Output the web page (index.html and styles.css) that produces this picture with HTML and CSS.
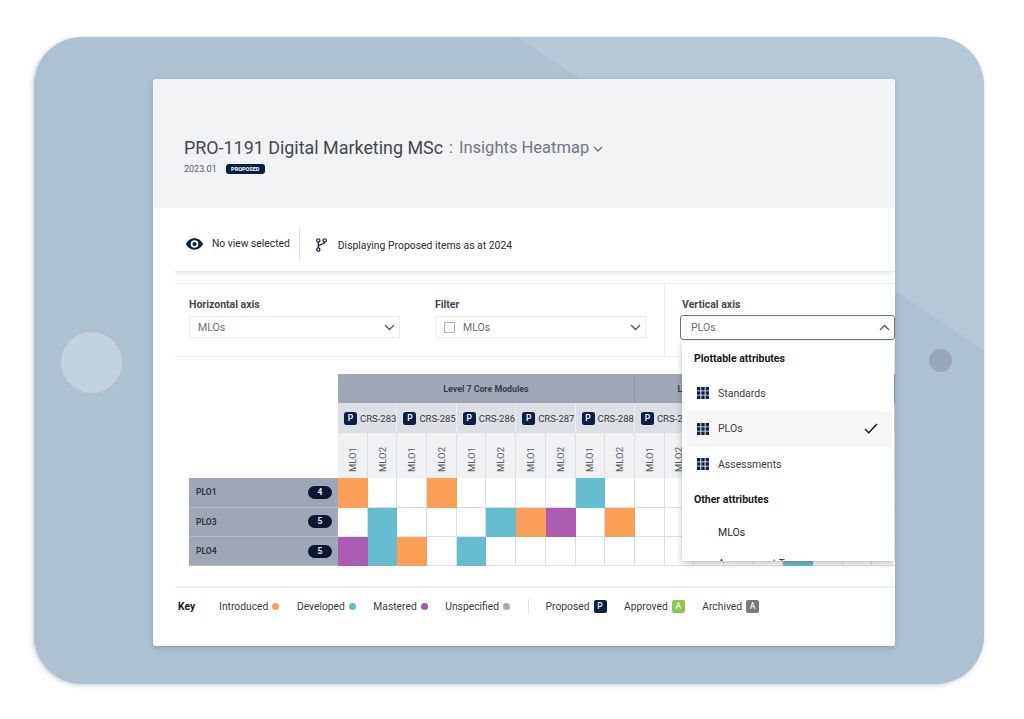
FILE: index.html
```html
<!DOCTYPE html>
<html lang="en">
<head>
<meta charset="utf-8">
<title>Insights Heatmap</title>
<link rel="stylesheet" href="styles.css">
</head>
<body>
<div class="device">
  <div class="home"></div>
  <main class="screen">
    <header class="head">
      <h1 class="title">PRO-1191 Digital Marketing MSc<span class="sep">:</span><span class="sub">Insights Heatmap</span>
        <svg class="title-chev" width="10" height="6" viewBox="0 0 10 6"><path d="M1 1l4 4 4-4" fill="none" stroke="#6b7078" stroke-width="1.3"/></svg>
      </h1>
      <div class="version"><span>2023.01</span><span class="status">PROPOSED</span></div>
    </header>

    <div class="toolbar">
      <div class="view">
        <svg width="17" height="12" viewBox="0 0 24 16"><path fill-rule="evenodd" fill="#0d2145" d="M12 0C6.5 0 2 3.3 0 8c2 4.700 6.500 8 12 8s10-3.300 12-8c-2-4.700-6.500-8-12-8zm0 13.300a5.300 5.300 0 1 1 0-10.600 5.300 5.300 0 0 1 0 10.600zM12 5a3 3 0 1 0 0 6 3 3 0 0 0 0-6z"/></svg>
        <span>No view selected</span>
      </div>
      <div class="display">
        <svg width="11" height="14" viewBox="0 0 12 15" fill="none" stroke="#0d2145" stroke-width="1.3"><circle cx="2.500" cy="2.500" r="1.800"/><circle cx="9.500" cy="2.500" r="1.800"/><circle cx="2.500" cy="12.500" r="1.800"/><path d="M2.500 4.300v6.400M9.500 4.300c0 3-7 2-7 5"/></svg>
        <span>Displaying Proposed items as at 2024</span>
      </div>
    </div>

    <section class="filters">
      <div class="field field-h">
        <label class="label">Horizontal axis</label>
        <div class="select"><span>MLOs</span><svg class="chev" width="11" height="7" viewBox="0 0 11 7"><path d="M1 1l4.500 4.500L10 1" fill="none" stroke="#555b63" stroke-width="1.400"/></svg></div>
      </div>
      <div class="field field-f">
        <label class="label">Filter</label>
        <div class="select"><i class="check-box"></i><span>MLOs</span><svg class="chev" width="11" height="7" viewBox="0 0 11 7"><path d="M1 1l4.500 4.500L10 1" fill="none" stroke="#555b63" stroke-width="1.400"/></svg></div>
      </div>
      <div class="field field-v">
        <label class="label">Vertical axis</label>
        <div class="select open"><span>PLOs</span><svg class="chev" width="11" height="7" viewBox="0 0 11 7"><path d="M1 6l4.500-4.500L10 6" fill="none" stroke="#555b63" stroke-width="1.400"/></svg></div>
        <div class="menu">
          <div class="menu-head">Plottable attributes</div>
          <div class="menu-item"><svg class="grid-ico" width="12" height="12" viewBox="0 0 12 12"><path fill="#0d2145" d="M0 0h3.400v3.400H0zM4.300 0h3.400v3.400H4.300zM8.600 0H12v3.400H8.600zM0 4.300h3.400v3.400H0zM4.300 4.300h3.400v3.400H4.300zM8.600 4.300H12v3.400H8.600zM0 8.600h3.400V12H0zM4.300 8.600h3.400V12H4.300zM8.600 8.600H12V12H8.600z"/></svg>Standards</div>
          <div class="menu-item active"><svg class="grid-ico" width="12" height="12" viewBox="0 0 12 12"><path fill="#0d2145" d="M0 0h3.400v3.400H0zM4.300 0h3.400v3.400H4.300zM8.600 0H12v3.400H8.600zM0 4.300h3.400v3.400H0zM4.300 4.300h3.400v3.400H4.300zM8.600 4.300H12v3.400H8.600zM0 8.600h3.400V12H0zM4.300 8.600h3.400V12H4.300zM8.600 8.600H12V12H8.600z"/></svg>PLOs<svg class="tick" width="14" height="11" viewBox="0 0 14 11"><path d="M1 6l3.700 3.700L13 1" fill="none" stroke="#111" stroke-width="1.400"/></svg></div>
          <div class="menu-item"><svg class="grid-ico" width="12" height="12" viewBox="0 0 12 12"><path fill="#0d2145" d="M0 0h3.400v3.400H0zM4.300 0h3.400v3.400H4.300zM8.600 0H12v3.400H8.600zM0 4.300h3.400v3.400H0zM4.300 4.300h3.400v3.400H4.300zM8.600 4.300H12v3.400H8.600zM0 8.600h3.400V12H0zM4.300 8.600h3.400V12H4.300zM8.600 8.600H12V12H8.600z"/></svg>Assessments</div>
          <div class="menu-head other">Other attributes</div>
          <div class="menu-plain">MLOs</div>
          <div class="menu-plain">Assessment Types</div>
        </div>
      </div>
    </section>

    <section class="heat">
      <div class="corner"></div>
      <div class="level l1">Level 7 Core Modules</div>
      <div class="level l2">Level 7 Option Modules</div>
      <div class="level l3"></div>

      <div class="course"><b class="p">P</b>CRS-283</div>
      <div class="course"><b class="p">P</b>CRS-285</div>
      <div class="course"><b class="p">P</b>CRS-286</div>
      <div class="course"><b class="p">P</b>CRS-287</div>
      <div class="course"><b class="p">P</b>CRS-288</div>
      <div class="course"><b class="p">P</b><span class="cut">CRS-2</span></div>
      <div class="course"></div>
      <div class="course"></div>
      <div class="course"></div>
      <div class="course one"></div>

      <div class="mlo"><span>MLO1</span></div><div class="mlo"><span>MLO2</span></div>
      <div class="mlo"><span>MLO1</span></div><div class="mlo"><span>MLO2</span></div>
      <div class="mlo"><span>MLO1</span></div><div class="mlo"><span>MLO2</span></div>
      <div class="mlo"><span>MLO1</span></div><div class="mlo"><span>MLO2</span></div>
      <div class="mlo"><span>MLO1</span></div><div class="mlo"><span>MLO2</span></div>
      <div class="mlo"><span>MLO1</span></div><div class="mlo"><span>MLO2</span></div>
      <div class="mlo"></div><div class="mlo"></div>
      <div class="mlo"></div><div class="mlo"></div>
      <div class="mlo"></div><div class="mlo"></div>
      <div class="mlo"></div>

      <div class="rowhead">PLO1<span class="pill">4</span></div>
      <i class="c o"></i><i class="c"></i><i class="c"></i><i class="c o"></i><i class="c"></i><i class="c"></i><i class="c"></i><i class="c"></i><i class="c t"></i><i class="c"></i><i class="c"></i><i class="c"></i><i class="c"></i><i class="c"></i><i class="c"></i><i class="c"></i><i class="c"></i><i class="c"></i><i class="c"></i>

      <div class="rowhead">PLO3<span class="pill">5</span></div>
      <i class="c"></i><i class="c t"></i><i class="c"></i><i class="c"></i><i class="c"></i><i class="c t"></i><i class="c o"></i><i class="c m"></i><i class="c"></i><i class="c o"></i><i class="c"></i><i class="c"></i><i class="c"></i><i class="c"></i><i class="c"></i><i class="c"></i><i class="c"></i><i class="c"></i><i class="c"></i>

      <div class="rowhead">PLO4<span class="pill">5</span></div>
      <i class="c m"></i><i class="c t"></i><i class="c o"></i><i class="c"></i><i class="c t"></i><i class="c"></i><i class="c"></i><i class="c"></i><i class="c"></i><i class="c"></i><i class="c"></i><i class="c"></i><i class="c"></i><i class="c"></i><i class="c"></i><i class="c t"></i><i class="c"></i><i class="c"></i><i class="c"></i>
    </section>

    <footer class="key">
      <strong class="key-title">Key</strong>
      <span class="key-item">Introduced<i class="dot d-o"></i></span>
      <span class="key-item">Developed<i class="dot d-t"></i></span>
      <span class="key-item">Mastered<i class="dot d-m"></i></span>
      <span class="key-item">Unspecified<i class="dot d-g"></i></span>
      <span class="key-div"></span>
      <span class="key-item">Proposed<b class="tag t-p">P</b></span>
      <span class="key-item">Approved<b class="tag t-a">A</b></span>
      <span class="key-item">Archived<b class="tag t-x">A</b></span>
    </footer>
  </main>
  <div class="cam"></div>
  <svg class="sheen" width="950" height="647" viewBox="0 0 950 647"><polygon points="484,0 950,313 950,0" fill="#fff" fill-opacity=".11"/></svg>
</div>
</body>
</html>
```

FILE: styles.css
```css
* { box-sizing: border-box; }
html, body { margin: 0; padding: 0; background: #fff; }
body { height: 719px; overflow: hidden; font-family: Roboto, "Liberation Sans", sans-serif; color: #26292e; }

.device {
  position: relative;
  width: 950px;
  height: 647px;
  margin: 37px 0 0 34px;
  padding-left: 27px;
  display: flex;
  align-items: center;
  background: #aec1d1;
  border-radius: 48px;
  box-shadow: -1px 1px 5px rgba(90, 105, 120, .35);
  overflow: hidden;
}
.home { width: 61px; height: 61px; border-radius: 50%; background: #c3d2df; flex: none; margin-top: 3px; }
.cam { width: 23px; height: 23px; border-radius: 50%; background: #98a8b7; flex: none; margin-left: 34px; }
.sheen { position: absolute; left: 0; top: 0; pointer-events: none; }

.screen {
  width: 742px;
  height: 567px;
  margin: 4px 0 0 31px;
  flex: none;
  background: #fff;
  border-radius: 3px;
  box-shadow: 0 2px 6px rgba(70, 85, 100, .3);
  overflow: hidden;
  display: flex;
  flex-direction: column;
}

.head { height: 129px; flex: none; background: #f1f2f4; padding: 58px 0 0 31px; }
.title { margin: 0; font-size: 17.900px; line-height: 22px; font-weight: 400; color: #45484e; display: flex; align-items: center; white-space: pre; }
.sep { color: #6b7078; font-size: 16px; margin-left: 6px; }
.sub { color: #74787f; font-size: 16.550px; margin-left: 6px; }
.title-chev { margin-left: 4px; margin-top: 1px; }
.version { display: flex; align-items: center; gap: 9px; margin-top: 5px; font-size: 9px; color: #555a61; }
.status { background: #0b1f45; color: #fff; font-size: 5.500px; font-weight: 700; height: 10px; line-height: 10px; padding: 0 3px; border-radius: 3px; width: 39px; text-align: center; }

.toolbar {
  margin-left: 22px;
  height: 64px;
  flex: none;
  display: flex;
  align-items: center;
  border-bottom: 1px solid #e9eaec;
  box-shadow: 0 2px 3px rgba(120, 125, 135, .16);
  clip-path: inset(0 0 -6px 0);
  font-size: 10.300px;
  color: #2a2d33;
}
.view { display: flex; align-items: center; gap: 9px; padding-left: 11px; height: 30px; padding-right: 9px; border-right: 1px solid #dfe0e3; margin-top: 9px; }
.view span { margin-top: -1px; }
.display { display: flex; align-items: center; gap: 11px; padding-left: 16px; margin-top: 11px; font-size: 10.400px; }

.filters {
  margin: 11px 0 0 22px;
  height: 74px;
  flex: none;
  display: flex;
  border-top: 1px solid #eeeff1;
  border-bottom: 1px solid #eeeff1;
}
.field { position: relative; padding-top: 14px; }
.field-h { width: 260px; padding-left: 14px; }
.field-f { width: 229px; }
.field-v { flex: 1; border-left: 1px solid #eeeff1; padding-left: 17px; }
.label { display: block; font-size: 10.500px; font-weight: 700; color: #45484e; line-height: 13px; margin-bottom: 5px; }
.select {
  width: 211px;
  height: 22px;
  display: flex;
  align-items: center;
  padding: 0 4px 0 8px;
  border: 1px solid #eceded;
  font-size: 10.500px;
  color: #6b6f76;
}
.chev { margin-left: auto; }
.check-box { width: 11px; height: 11px; border: 1px solid #b3b6bb; margin-right: 8px; flex: none; }
.select.open { width: 215px; height: 25px; margin: -1px 0 0 -2px; border: 1px solid #6f757d; border-radius: 3px; padding-left: 10px; }
.menu {
  position: absolute;
  left: 17px;
  top: 57px;
  width: 212px;
  height: 220px;
  background: #fff;
  box-shadow: 0 2px 6px rgba(50, 55, 65, .35);
  overflow: hidden;
  z-index: 2;
  font-size: 10.500px;
  color: #3a3d43;
}
.menu-head { font-weight: 700; color: #16181c; height: 34.500px; line-height: 36px; padding-left: 12px; }
.menu-item { height: 35.500px; display: flex; align-items: center; padding: 0 14px 0 10px; margin: 0 2px 0 5px; }
.menu-item.active { background: #f7f7f8; }
.grid-ico { margin-right: 9px; flex: none; }
.tick { margin-left: auto; }
.menu-plain { height: 31px; line-height: 31px; padding-left: 36px; color: #26292e; }

.heat {
  margin: 17px 0 0 36px;
  height: 192px;
  flex: none;
  display: grid;
  grid-template-columns: 149px repeat(19, 29.700px);
  grid-template-rows: 29px 30px 45px 29.500px 29.500px 29px;
  overflow: hidden;
  font-size: 9px;
}
.corner { grid-row: 1 / 4; }
.level { background: #a0a7b6; font-weight: 700; color: #3a3f4c; display: flex; align-items: center; justify-content: center; font-size: 8.800px; }
.l1 { grid-column: span 10; border-right: 1px solid #8f96a6; }
.l2 { grid-column: span 6; }
.l3 { grid-column: span 3; }
.course {
  grid-column: span 2;
  background: #dcdfe4;
  border-right: 1px solid #eceef0;
  display: flex;
  align-items: center;
  padding: 1px 0 0 6px;
  color: #3a3d43;
  white-space: nowrap;
  font-size: 9.500px;
}
.course.one { grid-column: span 1; }
.p { flex: none; width: 13px; height: 13px; border-radius: 2.500px; background: #0b1f45; color: #fff; font-size: 8.500px; line-height: 13px; text-align: center; margin-right: 3px; font-weight: 500; }
.mlo { background: #f0f1f3; border-right: 1px solid #dcdee1; display: flex; align-items: flex-end; justify-content: center; padding-bottom: 6px; color: #5a5e66; font-size: 9.500px; }
.mlo span { writing-mode: vertical-rl; transform: rotate(180deg); }
.rowhead { background: #9fa6b5; border-bottom: 1px solid #b4bac6; display: flex; align-items: center; justify-content: space-between; padding: 0 6px 0 7px; font-weight: 700; color: #33373f; font-size: 8.500px; }
.pill { width: 24px; height: 13px; border-radius: 7px; background: #0b1730; color: #e6e8ec; font-size: 8.500px; line-height: 13px; text-align: center; }
.c { background: #fff; border-right: 1px solid #dcdee1; border-bottom: 1px solid #dcdee1; display: block; }
.c.o { background: #fb9e57; border-color: #fb9e57; }
.c.t { background: #66bdd0; border-color: #66bdd0; }
.c.m { background: #ab5cb0; border-color: #ab5cb0; }

.key {
  margin: 20px 0 0 22px;
  flex: none;
  height: 41px;
  border-top: 2px solid #eeeff1;
  display: flex;
  align-items: center;
  font-size: 10.300px;
  color: #3a3d43;
  padding-bottom: 2px;
  white-space: nowrap;
}
.key-title { color: #16181c; margin: 0 24px 0 3px; }
.key-item { display: flex; align-items: center; gap: 4px; margin-right: 17.500px; }
.dot { width: 7px; height: 7px; border-radius: 50%; display: block; }
.d-o { background: #f6a15f; }
.d-t { background: #62bccd; }
.d-m { background: #a45bad; }
.d-g { background: #a8a9ac; }
.key-div { width: 1px; height: 15px; background: #e2e3e5; margin: 0 17px 0 0; }
.tag { width: 13px; height: 13px; border-radius: 2px; color: #e8edf2; font-size: 8.500px; line-height: 13px; text-align: center; font-weight: 500; display: block; }
.t-p { background: #0b1f45; }
.t-a { background: #8cc751; }
.t-x { background: #77797d; }
```
